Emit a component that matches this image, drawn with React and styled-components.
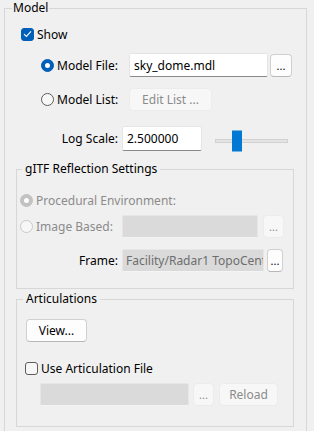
import React from "react";
import styled, { createGlobalStyle } from "styled-components";

const GlobalStyle = createGlobalStyle`
  html, body {
    margin: 0;
    padding: 0;
    background: #f0f0f0;
  }
  body {
    font-family: "Noto Sans", "Liberation Sans", sans-serif;
    font-size: 12px;
    color: #000;
  }
`;

const Page = styled.div`
  width: 314px;
  height: 431px;
  overflow: hidden;
  padding: 0 7px 0 4px;
  box-sizing: border-box;
`;

const Group = styled.fieldset`
  margin: ${p => p.$margin || "0"};
  padding: 0 0 ${p => p.$padBottom || 0}px ${p => p.$padLeft || 0}px;
  border: 1px solid #d7d7d7;
  min-width: 0;
  display: flex;
  flex-direction: column;
`;

const Legend = styled.legend`
  margin-left: ${p => p.$offset}px;
  padding: 0 ${p => p.$pad}px;
  line-height: 16px;
  color: #000;
`;

const Row = styled.div`
  display: flex;
  align-items: center;
  height: ${p => p.$h || 23}px;
  margin-top: ${p => p.$mt || 0}px;
  padding-left: ${p => p.$indent || 0}px;
`;

const Choice = styled.label`
  display: flex;
  align-items: center;
  gap: 3px;
  width: ${p => (p.$w ? `${p.$w}px` : "auto")};
  flex-shrink: 0;
  color: ${p => (p.$disabled ? "#8b8b8b" : "#000")};
`;

const FieldLabel = styled.span`
  width: ${p => p.$w}px;
  flex-shrink: 0;
  text-align: right;
  padding-right: 4px;
  box-sizing: border-box;
`;

const Radio = styled.span`
  width: 13px;
  height: 13px;
  border-radius: 50%;
  box-sizing: border-box;
  flex-shrink: 0;
  display: flex;
  align-items: center;
  justify-content: center;
  background: ${p =>
    p.$checked ? (p.$disabled ? "#c2c2c2" : "#005fb8") : "#f7f7f7"};
  border: 1px solid
    ${p =>
      p.$checked
        ? p.$disabled
          ? "#c2c2c2"
          : "#005fb8"
        : p.$disabled
        ? "#c9c9c9"
        : "#5d5d5d"};

  &::after {
    content: "";
    display: ${p => (p.$checked ? "block" : "none")};
    width: 5px;
    height: 5px;
    border-radius: 50%;
    background: #fff;
  }
`;

const Check = styled.span`
  width: 13px;
  height: 13px;
  border-radius: 3px;
  box-sizing: border-box;
  flex-shrink: 0;
  display: flex;
  align-items: center;
  justify-content: center;
  background: ${p => (p.$checked ? "#005fb8" : "#f6f6f6")};
  border: 1px solid ${p => (p.$checked ? "#005fb8" : "#5d5d5d")};
`;

const Input = styled.div`
  width: ${p => p.$w}px;
  height: ${p => p.$h || 23}px;
  box-sizing: border-box;
  flex-shrink: 0;
  display: flex;
  align-items: center;
  padding-left: ${p => (p.$disabled ? 3 : 4)}px;
  overflow: hidden;
  white-space: nowrap;
  border-radius: 2px;
  background: ${p => (p.$disabled ? "#dadada" : "#fff")};
  border: 1px solid ${p => (p.$disabled ? "#e6e6e6" : "#e5e5e5")};
  border-bottom-color: ${p => (p.$disabled ? "#f4f4f4" : "#8a8a8a")};
  color: ${p => (p.$disabled ? "#6d6d6d" : "#000")};
`;

const Button = styled.button`
  width: ${p => p.$w}px;
  height: ${p => p.$h || 23}px;
  margin-left: ${p => p.$ml || 0}px;
  flex-shrink: 0;
  padding: 0;
  font: inherit;
  font-size: ${p => (p.$small ? "11px" : "12px")};
  border-radius: 4px;
  background: ${p => (p.$disabled ? "#f7f7f7" : "#fdfdfd")};
  border: 1px solid ${p => (p.$disabled ? "#ececec" : "#d0d0d0")};
  border-bottom-color: ${p => (p.$disabled ? "#ececec" : "#b8b8b8")};
  color: ${p => (p.$disabled ? "#8b8b8b" : "#000")};
`;

const SliderTrack = styled.div`
  position: relative;
  width: 73px;
  height: 4px;
  margin: 4px 0 0 13px;
  box-sizing: border-box;
  background: #e4e4e4;
  border: 1px solid #d2d2d2;
`;

const SliderThumb = styled.span`
  position: absolute;
  top: 50%;
  width: 10px;
  height: 21px;
  transform: translateY(-50%);
  background: #0078d4;
`;

const CheckMark = () => (
  <svg width="9" height="8" viewBox="0 0 9 8">
    <path
      d="M1 4.2 L3.4 6.4 L8 1.4"
      fill="none"
      stroke="#fff"
      strokeWidth="1.1"
    />
  </svg>
);

export default function App() {
  const sliderPos = 16;

  return (
    <>
      <GlobalStyle />
      <Page>
        <Group $padBottom={40}>
          <Legend $offset={7} $pad={1}>Model</Legend>

          <Row $h={20} $mt={8} $indent={16}>
            <Choice>
              <Check $checked>
                <CheckMark />
              </Check>
              Show
            </Choice>
          </Row>

          <Row $h={24} $mt={9} $indent={36}>
            <Choice $w={88}>
              <Radio $checked />
              Model File:
            </Choice>
            <Input $w={139} $h={24}>sky_dome.mdl</Input>
            <Button $w={22} $ml={2} $small>
              ...
            </Button>
          </Row>

          <Row $mt={11} $indent={36}>
            <Choice $w={88}>
              <Radio />
              Model List:
            </Choice>
            <Button $w={83} $disabled>
              Edit List ...
            </Button>
          </Row>

          <Row $h={25} $mt={15}>
            <FieldLabel $w={117}>Log Scale:</FieldLabel>
            <Input $w={80} $h={25}>2.500000</Input>
            <SliderTrack>
              <SliderThumb style={{ left: sliderPos }} />
            </SliderTrack>
          </Row>

          <Group $margin="10px 12px 0 11px" $padBottom={16}>
            <Legend $offset={5} $pad={3}>gITF Reflection Settings</Legend>

            <Row $h={22} $mt={12} $indent={3}>
              <Choice $disabled>
                <Radio $checked $disabled />
                Procedural Environment:
              </Choice>
            </Row>

            <Row $mt={4} $indent={3}>
              <Choice $w={102} $disabled>
                <Radio $disabled />
                Image Based:
              </Choice>
              <Input $w={136} $disabled />
              <Button $w={21} $ml={5} $small $disabled>
                ...
              </Button>
            </Row>

            <Row $mt={11} $indent={3}>
              <FieldLabel $w={102}>Frame:</FieldLabel>
              <Input $w={142} $disabled>
                Facility/Radar1 TopoCentric
              </Input>
              <Button $w={16} $ml={3} $small>
                ...
              </Button>
            </Row>
          </Group>

          <Group $margin="2px 12px 0 11px" $padBottom={20}>
            <Legend $offset={6} $pad={3}>Articulations</Legend>

            <Row $mt={12} $indent={9}>
              <Button $w={61}>View...</Button>
            </Row>

            <Row $h={20} $mt={16} $indent={8}>
              <Choice>
                <Check />
                Use Articulation File
              </Choice>
            </Row>

            <Row $mt={5} $indent={23}>
              <Input $w={149} $disabled />
              <Button $w={21} $ml={4} $small $disabled>
                ...
              </Button>
              <Button $w={59} $ml={5} $disabled>
                Reload
              </Button>
            </Row>
          </Group>
        </Group>
      </Page>
    </>
  );
}
